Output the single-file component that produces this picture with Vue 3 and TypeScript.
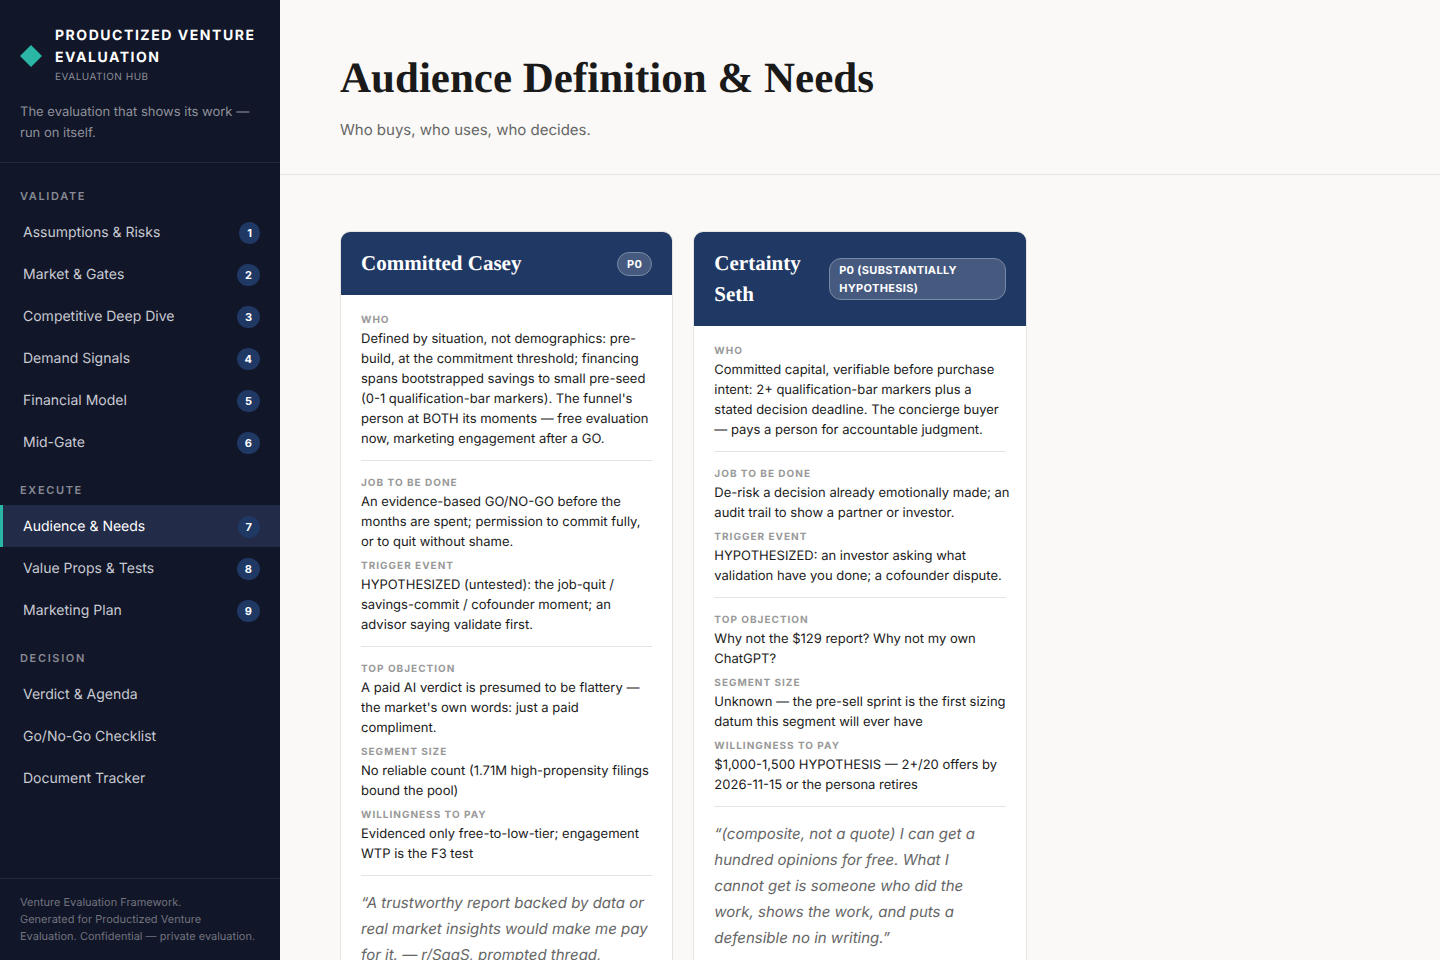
<script setup lang="ts">
interface NavItem {
  label: string
  step?: number
  active?: boolean
}
interface NavGroup {
  title: string
  items: NavItem[]
}
interface Field {
  label: string
  text: string
}
interface Persona {
  name: string
  priority: string
  sections: Field[][]
  quote: string
}

const groups: NavGroup[] = [
  {
    title: 'Validate',
    items: [
      { label: 'Assumptions & Risks', step: 1 },
      { label: 'Market & Gates', step: 2 },
      { label: 'Competitive Deep Dive', step: 3 },
      { label: 'Demand Signals', step: 4 },
      { label: 'Financial Model', step: 5 },
      { label: 'Mid-Gate', step: 6 },
    ],
  },
  {
    title: 'Execute',
    items: [
      { label: 'Audience & Needs', step: 7, active: true },
      { label: 'Value Props & Tests', step: 8 },
      { label: 'Marketing Plan', step: 9 },
    ],
  },
  {
    title: 'Decision',
    items: [
      { label: 'Verdict & Agenda' },
      { label: 'Go/No-Go Checklist' },
      { label: 'Document Tracker' },
    ],
  },
]

const personas: Persona[] = [
  {
    name: 'Committed Casey',
    priority: 'P0',
    sections: [
      [
        {
          label: 'Who',
          text: "Defined by situation, not demographics: pre-build, at the commitment threshold; financing spans bootstrapped savings to small pre-seed (0-1 qualification-bar markers). The funnel's person at BOTH its moments — free evaluation now, marketing engagement after a GO.",
        },
      ],
      [
        {
          label: 'Job to be done',
          text: 'An evidence-based GO/NO-GO before the months are spent; permission to commit fully,\nor to quit without shame.',
        },
        {
          label: 'Trigger event',
          text: 'HYPOTHESIZED (untested): the job-quit / savings-commit / cofounder moment; an\nadvisor saying validate first.',
        },
      ],
      [
        {
          label: 'Top objection',
          text: "A paid AI verdict is presumed to be flattery — the market's own words: just a paid\ncompliment.",
        },
        {
          label: 'Segment size',
          text: 'No reliable count (1.71M high-propensity filings bound the pool)',
        },
        {
          label: 'Willingness to pay',
          text: 'Evidenced only free-to-low-tier; engagement WTP is the F3 test',
        },
      ],
    ],
    quote:
      '“A trustworthy report backed by data or real market insights would make me pay for it. — r/SaaS, prompted thread,',
  },
  {
    name: 'Certainty Seth',
    priority: 'P0 (substantially hypothesis)',
    sections: [
      [
        {
          label: 'Who',
          text: 'Committed capital, verifiable before purchase intent: 2+ qualification-bar markers plus a\nstated decision deadline. The concierge buyer\n— pays a person for accountable judgment.',
        },
      ],
      [
        {
          label: 'Job to be done',
          text: 'De-risk a decision already emotionally made; an audit trail to show a partner or investor.',
        },
        {
          label: 'Trigger event',
          text: 'HYPOTHESIZED: an investor asking what validation have you done; a cofounder dispute.',
        },
      ],
      [
        {
          label: 'Top objection',
          text: 'Why not the $129 report? Why not my own ChatGPT?',
        },
        {
          label: 'Segment size',
          text: 'Unknown — the pre-sell sprint is the first sizing datum this segment will ever have',
        },
        {
          label: 'Willingness to pay',
          text: '$1,000-1,500 HYPOTHESIS — 2+/20 offers by 2026-11-15 or the persona retires',
        },
      ],
    ],
    quote:
      '“(composite, not a quote) I can get a hundred opinions for free. What I\ncannot get is someone who did the work, shows the work, and puts a defensible no in writing.”',
  },
]
</script>

<template>
  <div class="shell">
    <aside class="sidebar">
      <div class="sidebar-head">
        <div class="brand">
          <svg class="mark" viewBox="0 0 22 22" aria-hidden="true">
            <path d="M11 0 22 11 11 22 0 11Z" fill="#2ab5a5" />
          </svg>
          <div>
            <div class="brand-name">Productized Venture Evaluation</div>
            <div class="brand-sub">Evaluation Hub</div>
          </div>
        </div>
        <p class="tagline">The evaluation that shows its work — run on itself.</p>
      </div>

      <nav class="nav">
        <section v-for="group in groups" :key="group.title">
          <h2 class="group-title">{{ group.title }}</h2>
          <a
            v-for="item in group.items"
            :key="item.label"
            href="#"
            class="nav-link"
            :class="{ active: item.active }"
            :aria-current="item.active ? 'page' : undefined"
          >
            <span>{{ item.label }}</span>
            <span v-if="item.step" class="step">{{ item.step }}</span>
          </a>
        </section>
      </nav>

      <footer class="sidebar-foot">
        Venture Evaluation Framework.<br />
        Generated for Productized Venture Evaluation. Confidential — private evaluation.
      </footer>
    </aside>

    <main class="main">
      <header class="page-head">
        <h1>Audience Definition &amp; Needs</h1>
        <p>Who buys, who uses, who decides.</p>
      </header>

      <div class="cards">
        <article v-for="persona in personas" :key="persona.name" class="card">
          <header class="card-head">
            <h3>{{ persona.name }}</h3>
            <span class="priority">{{ persona.priority }}</span>
          </header>
          <div class="card-body">
            <dl v-for="(fields, index) in persona.sections" :key="index" class="fields">
              <div v-for="field in fields" :key="field.label">
                <dt>{{ field.label }}</dt>
                <dd>{{ field.text }}</dd>
              </div>
            </dl>
            <blockquote>{{ persona.quote }}</blockquote>
          </div>
        </article>
      </div>
    </main>
  </div>
</template>

<style>
body {
  margin: 0;
  background: #faf9f7;
}
</style>

<style scoped>
.shell {
  display: flex;
  height: 100vh;
  font-family: Inter, 'Liberation Sans', sans-serif;
  text-rendering: geometricPrecision;
  color: #1a1a1a;
}

.sidebar {
  display: flex;
  flex-direction: column;
  flex: 0 0 280px;
  box-sizing: border-box;
  background: #111628;
}

.sidebar-head {
  padding: 25px 20px 18px;
  border-bottom: 1px solid #252a3b;
}

.brand {
  display: flex;
  align-items: center;
  gap: 13px;
}

.mark {
  flex: none;
  width: 22px;
  height: 22px;
}

.brand-name {
  font-size: 14px;
  font-weight: 700;
  line-height: 22px;
  letter-spacing: 0.11em;
  text-transform: uppercase;
  color: #ffffff;
}

.brand-sub {
  font-size: 10px;
  line-height: 17px;
  letter-spacing: 0.05em;
  text-transform: uppercase;
  color: #8b8d97;
}

.tagline {
  margin: 16px 0 0;
  font-size: 13px;
  line-height: 21px;
  color: #8f919b;
}

.nav {
  display: flex;
  flex-direction: column;
  flex: 1;
  gap: 18px;
  padding-top: 24px;
}

.group-title {
  margin: 0 0 6px;
  padding: 0 20px;
  font-size: 11px;
  font-weight: 600;
  line-height: 18px;
  letter-spacing: 0.15em;
  text-transform: uppercase;
  color: #888a94;
}

.nav-link {
  display: flex;
  align-items: center;
  justify-content: space-between;
  box-sizing: border-box;
  height: 42px;
  padding: 2px 20px 0;
  border-left: 3px solid transparent;
  font-size: 14px;
  line-height: 22px;
  color: #c8cad2;
  text-decoration: none;
}

.nav-link.active {
  border-left-color: #2ab5a5;
  background: #222b47;
  color: #ffffff;
}

.step {
  padding: 2px 8px;
  border-radius: 12px;
  background: #203864;
  font-size: 11px;
  font-weight: 700;
  line-height: 18px;
  color: #ffffff;
}

.sidebar-foot {
  padding: 15px 20px;
  border-top: 1px solid #252a3b;
  font-size: 11px;
  line-height: 17px;
  color: #71747f;
}

.main {
  flex: 1;
  min-width: 0;
  overflow-y: auto;
  scrollbar-width: none;
}

.page-head {
  padding: 51px 60px 31px;
  border-bottom: 1px solid #e5e4e2;
}

.page-head h1 {
  margin: 0 0 10px;
  font-family: 'Liberation Serif', serif;
  font-size: 43px;
  font-weight: 600;
  line-height: 56px;
}

.page-head p {
  margin: 0;
  font-size: 15px;
  line-height: 26px;
  color: #666666;
}

.cards {
  display: grid;
  grid-template-columns: repeat(auto-fill, minmax(320px, 1fr));
  gap: 20px;
  padding: 56px 60px;
}

.card {
  overflow: hidden;
  border: 1px solid #e5e4e2;
  border-radius: 10px;
  background: #ffffff;
}

.card-head {
  display: flex;
  align-items: center;
  justify-content: space-between;
  gap: 12px;
  padding: 16px 20px;
  background: #203864;
  color: #ffffff;
}

.card-head h3 {
  margin: 0;
  font-family: 'Liberation Serif', serif;
  font-size: 21px;
  font-weight: 600;
  line-height: 31px;
}

.priority {
  padding: 2px 9px;
  border: 1px solid #7a89a5;
  border-radius: 12px;
  background: #465a7f;
  font-size: 11px;
  font-weight: 700;
  line-height: 18px;
  letter-spacing: 0.03em;
  text-transform: uppercase;
}

.card-body {
  padding: 17px 20px;
}

.fields {
  display: flex;
  flex-direction: column;
  gap: 6px;
  margin: 0 0 14px;
  padding-bottom: 11px;
  border-bottom: 1px solid #e5e4e2;
}

.fields dt {
  font-size: 10px;
  font-weight: 700;
  line-height: 17px;
  letter-spacing: 0.1em;
  text-transform: uppercase;
  color: #999999;
}

.fields dd {
  margin: 0 -6px 0 0;
  font-size: 13px;
  line-height: 20px;
  white-space: pre-line;
}

blockquote {
  margin: 0;
  font-size: 15px;
  font-style: italic;
  line-height: 26px;
  white-space: pre-line;
  color: #666666;
}
</style>
